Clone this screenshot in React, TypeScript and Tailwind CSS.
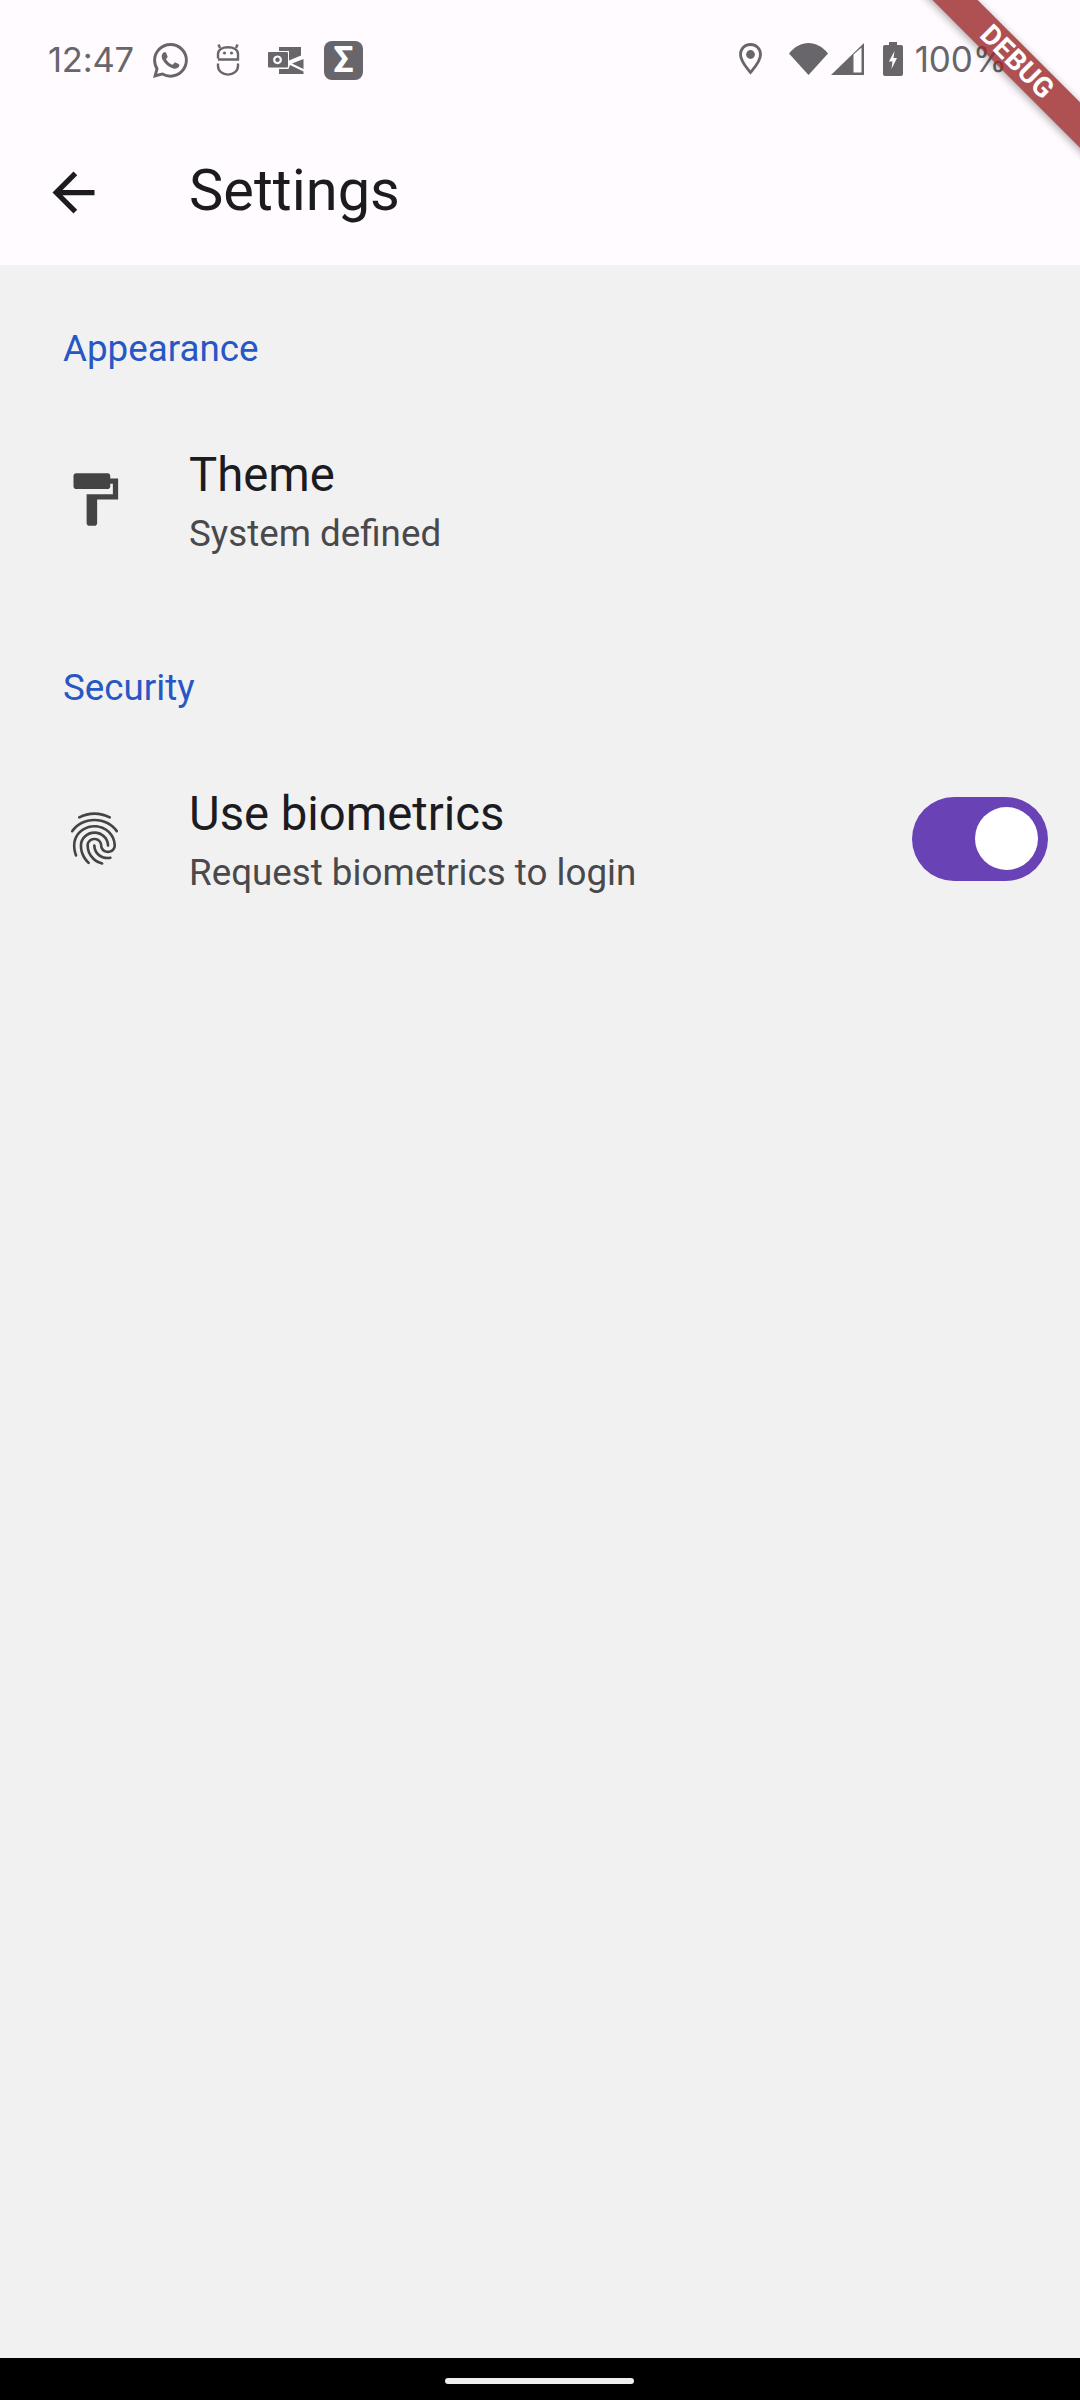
import React from "react";
import { BsWhatsapp } from "react-icons/bs";

const FINGERPRINT =
  "M17.81 4.47c-.08 0-.16-.02-.23-.06C15.66 3.42 14 3 12.01 3c-1.98 0-3.86.47-5.57 1.41-.24.13-.54.04-.68-.2-.13-.24-.04-.55.2-.68C7.82 2.52 9.86 2 12.01 2c2.13 0 3.99.47 6.03 1.52.25.13.34.43.21.67-.09.18-.26.28-.44.28zM3.5 9.72c-.1 0-.2-.03-.29-.09-.23-.16-.28-.47-.12-.7.99-1.4 2.25-2.5 3.75-3.27C9.98 4.04 14 4.03 17.15 5.65c1.5.77 2.76 1.86 3.75 3.25.16.22.11.54-.12.7-.23.16-.54.11-.7-.12-.9-1.26-2.04-2.25-3.39-2.94-2.87-1.47-6.54-1.47-9.4.01-1.36.7-2.5 1.7-3.4 2.96-.08.14-.23.21-.39.21zm6.25 12.07c-.13 0-.26-.05-.35-.15-.87-.87-1.34-1.43-2.01-2.64-.69-1.23-1.05-2.73-1.05-4.34 0-2.97 2.54-5.39 5.66-5.39s5.66 2.42 5.66 5.39c0 .28-.22.5-.5.5s-.5-.22-.5-.5c0-2.42-2.09-4.39-4.66-4.39-2.57 0-4.66 1.97-4.66 4.39 0 1.44.32 2.77.93 3.85.64 1.15 1.08 1.64 1.85 2.42.19.2.19.51 0 .71-.11.1-.24.15-.37.15zm7.17-1.85c-1.19 0-2.24-.3-3.1-.89-1.49-1.01-2.38-2.65-2.38-4.39 0-.28.22-.5.5-.5s.5.22.5.5c0 1.41.72 2.74 1.94 3.56.71.48 1.54.71 2.54.71.24 0 .64-.03 1.04-.1.27-.05.53.13.58.41.05.27-.13.53-.41.58-.57.11-1.07.12-1.21.12zM14.91 22c-.04 0-.09-.01-.13-.02-1.59-.44-2.63-1.03-3.72-2.1-1.4-1.39-2.17-3.24-2.17-5.22 0-1.62 1.38-2.94 3.08-2.94 1.7 0 3.08 1.32 3.08 2.94 0 1.07.93 1.94 2.08 1.94s2.08-.87 2.08-1.94c0-3.77-3.25-6.83-7.25-6.83-2.84 0-5.44 1.58-6.61 4.03-.39.81-.59 1.76-.59 2.8 0 .78.07 2.01.67 3.61.1.26-.03.55-.29.64-.26.1-.55-.04-.64-.29-.49-1.31-.73-2.61-.73-3.96 0-1.2.23-2.29.68-3.24 1.33-2.79 4.28-4.6 7.51-4.6 4.55 0 8.25 3.51 8.25 7.83 0 1.62-1.38 2.94-3.08 2.94s-3.08-1.32-3.08-2.94c0-1.07-.93-1.94-2.08-1.94s-2.08.87-2.08 1.94c0 1.71.66 3.31 1.87 4.51.95.94 1.86 1.46 3.27 1.85.27.07.42.35.35.61-.05.23-.26.38-.47.38z";

const GREY = "#68666b";

function RobotIcon() {
  return (
    <svg width="24" height="32" viewBox="0 0 24 32" fill="none" stroke={GREY} strokeWidth="2.4">
      <path d="M2 14.5V10C2 5.5 6.5 3.2 12 3.2S22 5.5 22 10V15.5H2M2 19.5V22C2 27 6.5 30.6 12 30.6S22 27 22 22V19.5" />
      <path d="M4 4 2.5 .5M20 4 21.5 .5" />
      <circle cx="8.5" cy="9" r="1.6" fill={GREY} stroke="none" />
      <circle cx="15.5" cy="9" r="1.6" fill={GREY} stroke="none" />
    </svg>
  );
}

function OutlookIcon() {
  return (
    <svg width="36" height="27" viewBox="0 0 36 27" fill={GREY}>
      <path d="M11 0H33V8.5L21 13.5V4H11Z" />
      <path d="M35.5 12V22L24 16.5Z" />
      <path d="M11 22H20.5L22 18 35.5 24.5V27H11Z" />
      <path fillRule="evenodd" d="M1 5H18.5C19.5 5 20 5.5 20 6.5V19C20 20 19.5 20.5 18.5 20.5H1C.3 20.5 0 20 0 19V6.5C0 5.5 .3 5 1 5ZM9.5 8.4a4.4 4.4 0 1 0 .01 0ZM9.5 10.6a2.2 2.2 0 1 1-.01 0Z" />
    </svg>
  );
}

function PinIcon() {
  return (
    <svg width="23" height="32" viewBox="0 0 23 32" fill="none" stroke={GREY} strokeWidth="2.8">
      <path d="M11.5 29.5C8 25 1.5 18.5 1.5 11.5C1.5 5.8 6 1.5 11.5 1.5S21.5 5.8 21.5 11.5C21.5 18.5 15 25 11.5 29.5Z" />
      <circle cx="11.5" cy="11.5" r="4.4" fill={GREY} stroke="none" />
    </svg>
  );
}

function WifiIcon() {
  return (
    <svg width="39" height="32" viewBox="0 0 39 32" fill={GREY}>
      <path d="M0 10.5C11 -3.5 28 -3.5 39 10.5L19.5 32Z" />
    </svg>
  );
}

function SignalIcon() {
  return (
    <svg width="33" height="32" viewBox="0 0 33 32">
      <path d="M33 0V32H0Z" fill={GREY} />
      <path d="M22.5 11.5 30.5 4.5V29.5H22.5Z" fill="#fffbfe" />
    </svg>
  );
}

function BatteryIcon() {
  return (
    <svg width="20" height="34" viewBox="0 0 20 34">
      <path d="M6 0H14V3H18C19.2 3 20 3.8 20 5V32C20 33.2 19.2 34 18 34H2C.8 34 0 33.2 0 32V5C0 3.8 .8 3 2 3H6Z" fill={GREY} />
      <path d="M11.5 9 6 19.5H9.5L8.5 27 14 16H10.5Z" fill="#fffbfe" />
    </svg>
  );
}

function SectionHeader({ label }: { label: string }) {
  return <h2 className="pl-[63px] text-[36.75px] leading-[44px] text-[#2756c5] font-normal">{label}</h2>;
}

function Tile({ icon, title, subtitle, trailing }: { icon: React.ReactNode; title: string; subtitle: string; trailing?: React.ReactNode }) {
  return (
    <div className="mt-[76.5px] flex items-center">
      <div className="ml-[63px] -mt-[4px] w-[63px] h-[63px] shrink-0">{icon}</div>
      <div className="ml-[63px] flex-1 flex flex-col">
        <span className="-mt-[1px] text-[47.25px] leading-[56px] text-[#1c1b1f]">{title}</span>
        <span className="mt-[9px] text-[36.75px] leading-[44px] text-[#49494b]">{subtitle}</span>
      </div>
      {trailing}
    </div>
  );
}

export default function App() {
  return (
    <div className="relative h-[2400px] w-[1080px] overflow-hidden flex flex-col bg-[#f1f1f1] font-['Roboto',sans-serif]">
      <div className="bg-[#fffbfe] h-[265px] shrink-0 flex flex-col">
        <div className="h-[155px] flex justify-between items-start pl-[48px] pr-[73px]">
          <div className="flex items-center h-[40px] mt-[40px]">
            <span className="text-[34.5px] leading-[40px] text-[#68666b] font-['Inter',sans-serif] tracking-[-0.2px] w-[105px]">12:47</span>
            <BsWhatsapp size={35} color={GREY} />
            <div className="ml-[28px]"><RobotIcon /></div>
            <div className="ml-[28px]"><OutlookIcon /></div>
            <div className="ml-[20px] w-[39px] h-[39px] rounded-[8px] bg-[#68666b] flex items-center justify-center text-white text-[36px] leading-none font-bold">Σ</div>
          </div>
          <div className="flex items-center h-[40px] mt-[39px]">
            <PinIcon />
            <div className="ml-[27px]"><WifiIcon /></div>
            <div className="ml-[3px]"><SignalIcon /></div>
            <div className="ml-[19px]"><BatteryIcon /></div>
            <span className="ml-[12px] text-[35px] leading-[40px] text-[#68666b] font-['Inter',sans-serif] tracking-[-0.1px]">100%</span>
          </div>
        </div>
        <div className="flex items-center pl-[42px] h-[70px]">
          <svg width="63" height="63" viewBox="0 0 24 24" fill="#1c1b1f" className="mt-[4px]"><path d="M20 11H7.83l5.59-5.59L12 4l-8 8 8 8 1.41-1.41L7.83 13H20v-2z" /></svg>
          <span className="ml-[84px] text-[57.75px] leading-[70px] text-[#1c1b1f]">Settings</span>
        </div>
      </div>

      <main className="flex-1 flex flex-col">
        <section className="pt-[62px] pb-[48.5px]">
          <SectionHeader label="Appearance" />
          <Tile
            title="Theme"
            subtitle="System defined"
            icon={<svg width="63" height="63" viewBox="0 0 24 24" fill="#444444"><path d="M18 4V3c0-.55-.45-1-1-1H5c-.55 0-1 .45-1 1v4c0 .55.45 1 1 1h12c.55 0 1-.45 1-1V6h1v4H9v11c0 .55.45 1 1 1h2c.55 0 1-.45 1-1v-9h8V4h-3z" /></svg>}
          />
        </section>
        <section className="pt-[62px]">
          <SectionHeader label="Security" />
          <Tile
            title="Use biometrics"
            subtitle="Request biometrics to login"
            icon={<svg width="63" height="63" viewBox="0 0 24 24" fill="#444444"><path d={FINGERPRINT} /></svg>}
            trailing={
              <div className="mr-[32px] -mt-[4px] w-[136px] h-[84px] rounded-full bg-[#6943b5] flex items-center justify-end pr-[10px]">
                <div className="w-[63px] h-[63px] rounded-full bg-white" />
              </div>
            }
          />
        </section>
      </main>

      <div className="h-[42px] shrink-0 bg-black flex justify-center pt-[20px]">
        <div className="w-[189px] h-[6px] rounded-full bg-[#eeeeee] -translate-x-[1px]" />
      </div>

      <div className="absolute left-[867px] top-[46px] w-[300px] h-[32px] rotate-45 bg-[#9b2727]/80 shadow-[0_2px_8px_rgba(0,0,0,0.35)] flex items-center justify-center text-white text-[28px] font-bold tracking-[0.3px]">
        DEBUG
      </div>
    </div>
  );
}
